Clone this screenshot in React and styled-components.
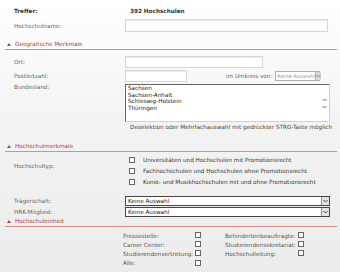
import React from 'react';
import styled, { createGlobalStyle } from 'styled-components';

const GlobalStyle = createGlobalStyle`
    html, body {
        margin: 0;
        padding: 0;
    }
    body {
        width: 340px;
        height: 272px;
        overflow: hidden;
        background: linear-gradient(180deg, #ffffff 0%, #f3f3f3 45%, #ececec 100%);
        font-family: "DejaVu Sans", Verdana, sans-serif;
        font-size: 5.7px;
        color: #555;
    }
`;

const Page = styled.div`
    padding: 5px 3px 0 5px;
`;

const Row = styled.div`
    display: grid;
    grid-template-columns: 111px 1fr;
    align-items: ${props => props.$top ? 'start' : 'center'};
    padding-left: 9px;
    height: ${props => props.$h}px;
    margin-top: ${props => props.$mt || 0}px;
`;

const Label = styled.div`
    color: ${props => props.$strong ? '#333' : '#666'};
    font-weight: ${props => props.$strong ? 'bold' : 'normal'};
    padding-top: ${props => props.$pt || 0}px;
    white-space: nowrap;
`;

const Value = styled.div`
    color: #333;
    padding-left: 5px;
`;

const Input = styled.div`
    box-sizing: border-box;
    width: ${props => props.$w}px;
    height: ${props => props.$h || 12}px;
    background: #fff;
    border: 1px solid #d6d6d6;
    box-shadow: inset 0 1px 0 #ececec;
`;

const Inline = styled.div`
    display: flex;
    align-items: center;
`;

const Umkreis = styled.span`
    margin-left: 39px;
    margin-right: 3px;
    color: #666;
`;

const SelectBox = styled.div`
    box-sizing: border-box;
    display: flex;
    align-items: center;
    width: ${props => props.$w}px;
    height: ${props => props.$h || 10}px;
    background: #fff;
    border: 1px solid ${props => props.$muted ? '#b0b0b0' : '#444'};
    color: ${props => props.$muted ? '#999' : '#222'};
    font-size: ${props => props.$muted ? '5.2px' : 'inherit'};
    padding-left: ${props => props.$muted ? 1 : 2}px;
`;

const SelectText = styled.span`
    flex: 1;
    white-space: nowrap;
`;

const ArrowBox = styled.span`
    box-sizing: border-box;
    width: 8px;
    height: 100%;
    display: flex;
    align-items: center;
    justify-content: center;
    background: ${props => props.$muted ? '#d8d8d8' : '#e4e4e4'};
    border-left: 1px solid ${props => props.$muted ? '#b0b0b0' : '#999'};
`;

const ListBox = styled.div`
    box-sizing: border-box;
    display: flex;
    width: 205px;
    height: 38px;
    background: #fff;
    border: 1px solid #d0d0d0;
    border-top-color: #666;
    border-left-color: #666;
`;

const ListItems = styled.div`
    flex: 1;
    color: #222;
    line-height: 6.6px;
    padding: 0 0 0 2px;
`;

const ScrollCol = styled.div`
    width: 10px;
    display: flex;
    flex-direction: column;
    justify-content: center;
    align-items: center;
    gap: 3px;
`;

const Hint = styled.div`
    padding-left: 125px;
    margin-top: 1px;
    height: 8px;
    line-height: 8px;
    color: #444;
    white-space: nowrap;
`;

const Section = styled.div`
    display: flex;
    align-items: center;
    gap: 4px;
    padding: ${props => props.$pt}px 0 1px 2px;
    height: 8px;
    border-bottom: 1px solid #d98c8c;
    color: #b53a3a;
`;

const Triangle = styled.span`
    width: 0;
    height: 0;
    border-left: 2px solid transparent;
    border-right: 2px solid transparent;
    border-bottom: 3px solid #b53a3a;
`;

const CheckList = styled.div`
    display: flex;
    flex-direction: column;
    padding-left: 4px;
`;

const CheckRow = styled.div`
    display: flex;
    align-items: center;
    height: 11px;
    gap: 8px;
    color: #333;
    white-space: nowrap;
`;

const Box = styled.span`
    box-sizing: border-box;
    display: inline-block;
    width: 6px;
    height: 6px;
    background: #fff;
    border: 1px solid #666;
    flex: none;
`;

const UnitGrid = styled.div`
    display: grid;
    grid-template-columns: 72px 30px 73px 10px;
    grid-auto-rows: 9.2px;
    align-items: center;
    padding-left: 118px;
    margin-top: 4px;
    color: #555;
`;

const UnitLabel = styled.span`
    white-space: nowrap;
`;

const Chevron = ({ up, color = '#555' }) => (
    <svg width="5" height="4" viewBox="0 0 5 4">
        <path d={up ? 'M0.5 3 L2.5 1 L4.5 3' : 'M0.5 1 L2.5 3 L4.5 1'} fill="none" stroke={color} strokeWidth="0.9" />
    </svg>
);

const Select = ({ w, muted, h }) => (
    <SelectBox $w={w} $muted={muted} $h={h}>
        <SelectText>Keine Auswahl</SelectText>
        <ArrowBox $muted={muted}><Chevron color={muted ? '#777' : '#333'} /></ArrowBox>
    </SelectBox>
);

const types = [
    'Universitäten und Hochschulen mit Promotionsrecht',
    'Fachhochschulen und Hochschulen ohne Promotionsrecht',
    'Kunst- und Musikhochschulen mit und ohne Promotionsrecht'
];

const units = [
    ['Pressestelle:', 'Behindertenbeauftragte:'],
    ['Career Center:', 'Studierendensekretariat:'],
    ['Studierendenvertretung:', 'Hochschulleitung:'],
    ['Alle:', null]
];

export default function App() {
    return (
        <Page>
            <GlobalStyle />
            <Row $h={12}>
                <Label $strong>Treffer:</Label>
                <Value><b>392 Hochschulen</b></Value>
            </Row>
            <Row $h={13} $mt={2}>
                <Label>Hochschulname:</Label>
                <Input $w={203} $h={13} />
            </Row>

            <Section $pt={8}><Triangle />Geografische Merkmale</Section>
            <Row $h={12} $mt={6}>
                <Label>Ort:</Label>
                <Input $w={138} />
            </Row>
            <Row $h={12} $mt={2}>
                <Label>Postleitzahl:</Label>
                <Inline>
                    <Input $w={62} />
                    <Umkreis>im Umkreis von:</Umkreis>
                    <Select w={45} h={10} muted />
                </Inline>
            </Row>
            <Row $h={38} $mt={2} $top>
                <Label>Bundesland:</Label>
                <ListBox>
                    <ListItems>
                        <div>Sachsen</div>
                        <div>Sachsen-Anhalt</div>
                        <div>Schleswig-Holstein</div>
                        <div>Thüringen</div>
                    </ListItems>
                    <ScrollCol>
                        <Chevron up />
                        <Chevron />
                    </ScrollCol>
                </ListBox>
            </Row>
            <Hint>Deselektion oder Mehrfachauswahl mit gedrückter STRG-Taste möglich</Hint>

            <Section $pt={11}><Triangle />Hochschulmerkmale</Section>
            <Row $h={33} $mt={2} $top>
                <Label $pt={9}>Hochschultyp:</Label>
                <CheckList>
                    {types.map(t => (
                        <CheckRow key={t}><Box />{t}</CheckRow>
                    ))}
                </CheckList>
            </Row>
            <Row $h={10} $mt={9}>
                <Label>Trägerschaft:</Label>
                <Select w={205} />
            </Row>
            <Row $h={10} $mt={1}>
                <Label>HRK-Mitglied:</Label>
                <Select w={205} />
            </Row>

            <Section $pt={0}><Triangle />Hochschuleinheit</Section>
            <UnitGrid>
                {units.map(([a, b]) => (
                    <React.Fragment key={a}>
                        <UnitLabel>{a}</UnitLabel>
                        <span><Box /></span>
                        <UnitLabel>{b}</UnitLabel>
                        <span>{b && <Box />}</span>
                    </React.Fragment>
                ))}
            </UnitGrid>
        </Page>
    );
}
